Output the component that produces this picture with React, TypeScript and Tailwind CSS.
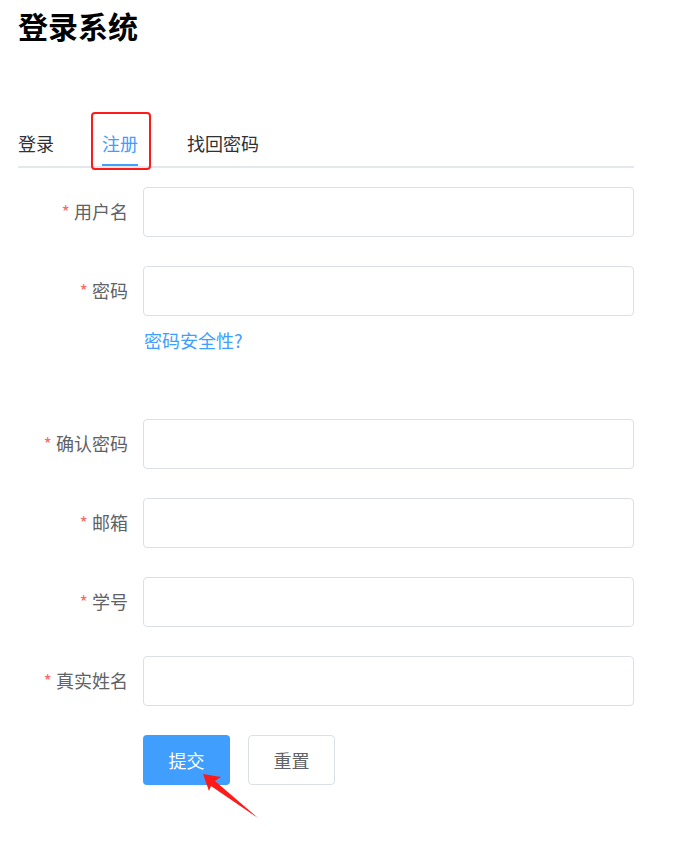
const fields = [
  { label: '用户名' },
  { label: '密码', hint: '密码安全性?' },
  { label: '确认密码' },
  { label: '邮箱' },
  { label: '学号' },
  { label: '真实姓名' },
];

function FormRow({ label, hint }: { label: string; hint?: string }) {
  return (
    <div className={hint ? 'mb-0' : 'mb-[29px]'}>
      <div className="flex items-center h-[50px]">
        <label className="w-[125px] pr-[15px] text-right text-[18px] leading-[24px] text-[#606266] -mt-[2px]">
          <span className="text-[#f56c6c] mr-[4px]">*</span>
          {label}
        </label>
        <input className="flex-1 h-[50px] border border-[#dcdfe6] rounded-[4px] px-3 outline-none" />
      </div>
      {hint && (
        <div className="pl-[126px] pt-[12px] h-[103px]">
          <a className="text-[18px] leading-[24px] text-[#409eff] cursor-pointer">{hint}</a>
        </div>
      )}
    </div>
  );
}

export default function App() {
  return (
    <div
      className="relative w-[688px] h-[843px] bg-white overflow-hidden"
      style={{ fontFamily: '"Noto Sans CJK SC", "Liberation Sans", sans-serif' }}
    >
      <div className="w-[634px] pl-[18px]">
        {/* Title */}
        <h1 className="pt-[8px] text-[30px] leading-[34px] font-bold text-black">登录系统</h1>

        {/* Tabs */}
        <div className="mt-[82px] flex border-b-2 border-[#e4e7ed] h-[44px]">
          <div className="pr-[24px] h-[42px] leading-[38px] text-[18px] text-[#303133]">登录</div>
          <div className="pl-[24px] pr-[25px] h-[42px]">
            <div className="h-[42px] leading-[38px] text-[18px] text-[#409eff] border-b-2 border-[#409eff]">
              注册
            </div>
          </div>
          <div className="px-[24px] h-[42px] leading-[38px] text-[18px] text-[#303133]">找回密码</div>
        </div>

        {/* Form */}
        <form className="mt-[19px]">
          {fields.map((f) => (
            <FormRow key={f.label} label={f.label} hint={f.hint} />
          ))}
          <div className="flex gap-[18px] pl-[125px]">
            <button
              type="button"
              className="w-[87px] h-[50px] rounded-[4px] bg-[#409eff] text-white text-[18px]"
            >
              提交
            </button>
            <button
              type="button"
              className="w-[87px] h-[50px] rounded-[4px] border border-[#dcdfe6] bg-white text-[#606266] text-[18px]"
            >
              重置
            </button>
          </div>
        </form>
      </div>

      {/* annotations */}
      <svg className="absolute left-0 top-0 pointer-events-none" width="688" height="843">
        <rect x="92" y="113" width="58" height="56" rx="3" fill="none" stroke="#ff1a1a" strokeWidth="2" />
        <polygon
          points="203,774 221,777 215,781 258,818 211,786 209,791"
          fill="#ff1a1a"
        />
      </svg>
    </div>
  );
}
